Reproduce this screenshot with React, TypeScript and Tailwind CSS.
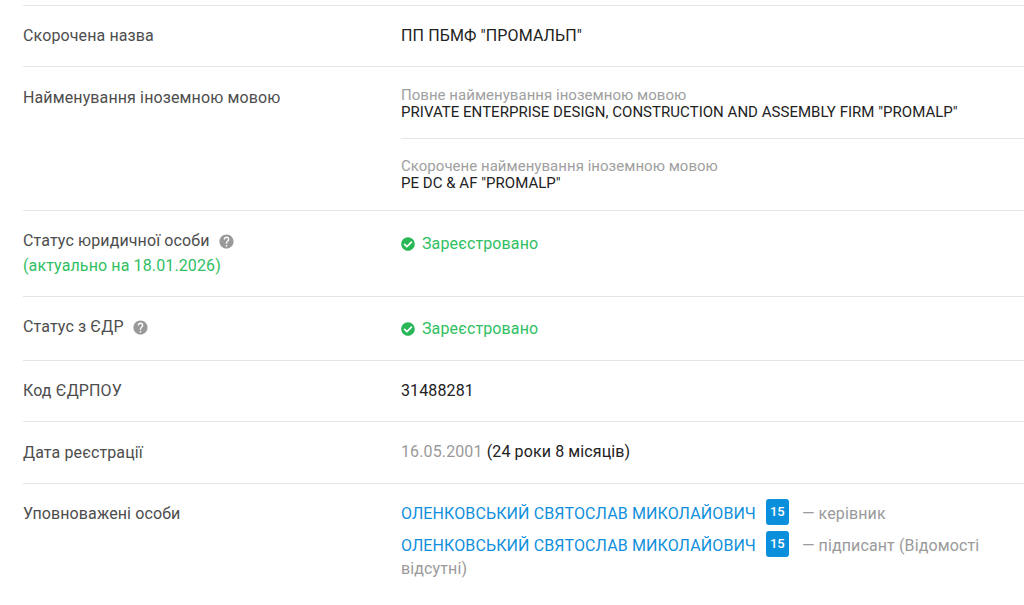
import { FaCheckCircle } from "react-icons/fa";
import { MdHelp } from "react-icons/md";

function Row({
    label,
    height,
    children,
}: {
    label: React.ReactNode;
    height: string;
    children: React.ReactNode;
}) {
    return (
        <div className={`flex border-b border-[#e6e6e6] ${height}`}>
            <div className="w-[378px] shrink-0 text-[#4d4d4d]">{label}</div>
            <div className="flex-1 min-w-0">{children}</div>
        </div>
    );
}

function Registered() {
    return (
        <div className="flex items-center gap-[7px] text-[#2fbf62]">
            <FaCheckCircle className="w-[14px] h-[14px] text-[#27b757]" />
            <span>Зареєстровано</span>
        </div>
    );
}

function Person({ role }: { role: string }) {
    return (
        <div className="leading-[23px] text-[#9a9a9a]">
            <span className="text-[#0f8fdc]">ОЛЕНКОВСЬКИЙ СВЯТОСЛАВ МИКОЛАЙОВИЧ</span>
            <span className="inline-block ml-[10px] mr-[13px] -mt-[3px] w-[23px] h-[26px] leading-[26px] rounded-[3px] bg-[#0a8fdc] text-white text-[13px] font-medium text-center align-top tracking-normal">
                15
            </span>
            {role}
        </div>
    );
}

export default function App() {
    return (
        <div className="h-[605px] w-[1024px] overflow-hidden bg-white pl-[23px] text-[16px] leading-[24px] tracking-[0.12px] font-['Roboto',sans-serif]">
            <div className="h-[6px] border-b border-[#e6e6e6]" />

            <Row label={<div className="pt-[18px]">Скорочена назва</div>} height="h-[61px]">
                <div className="pt-[18px] text-[#222]">ПП ПБМФ "ПРОМАЛЬП"</div>
            </Row>

            <Row label={<div className="pt-[19px]">Найменування іноземною мовою</div>} height="h-[144px]">
                <div className="pt-[20px] h-[72px] border-b border-[#e6e6e6] text-[15px] leading-[17px] tracking-[0.03px]">
                    <div className="text-[#a0a0a0]">Повне найменування іноземною мовою</div>
                    <div className="text-[#222]">
                        PRIVATE ENTERPRISE DESIGN, CONSTRUCTION AND ASSEMBLY FIRM "PROMALP"
                    </div>
                </div>
                <div className="pt-[19px] text-[15px] leading-[17px] tracking-[0.03px]">
                    <div className="text-[#a0a0a0]">Скорочене найменування іноземною мовою</div>
                    <div className="text-[#222]">PE DC & AF "PROMALP"</div>
                </div>
            </Row>

            <Row
                label={
                    <div className="pt-[18px]">
                        <div className="flex items-center h-[24px]">
                            Статус юридичної особи
                            <MdHelp className="ml-[8px] w-[17px] h-[17px] text-[#999]" />
                        </div>
                        <div className="text-[#2fbf62] leading-[24px] pt-[1px]">(актуально на 18.01.2026)</div>
                    </div>
                }
                height="h-[86px]"
            >
                <div className="pt-[21px]">
                    <Registered />
                </div>
            </Row>

            <Row
                label={
                    <div className="pt-[18px] flex items-center h-[42px]">
                        Статус з ЄДР
                        <MdHelp className="ml-[8px] w-[17px] h-[17px] text-[#999]" />
                    </div>
                }
                height="h-[64px]"
            >
                <div className="pt-[20px]">
                    <Registered />
                </div>
            </Row>

            <Row label={<div className="pt-[18px]">Код ЄДРПОУ</div>} height="h-[61px]">
                <div className="pt-[18px] text-[#222]">31488281</div>
            </Row>

            <Row label={<div className="pt-[19px]">Дата реєстрації</div>} height="h-[62px]">
                <div className="pt-[18px] text-[#222]">
                    <span className="text-[#9a9a9a]">16.05.2001</span> (24 роки 8 місяців)
                </div>
            </Row>

            <div className="flex">
                <div className="w-[378px] shrink-0 pt-[18px] text-[#4d4d4d]">Уповноважені особи</div>
                <div className="flex-1 min-w-0 pt-[18px] pr-[40px] flex flex-col gap-[9px]">
                    <Person role="— керівник" />
                    <Person role="— підписант (Відомості відсутні)" />
                </div>
            </div>
        </div>
    );
}
